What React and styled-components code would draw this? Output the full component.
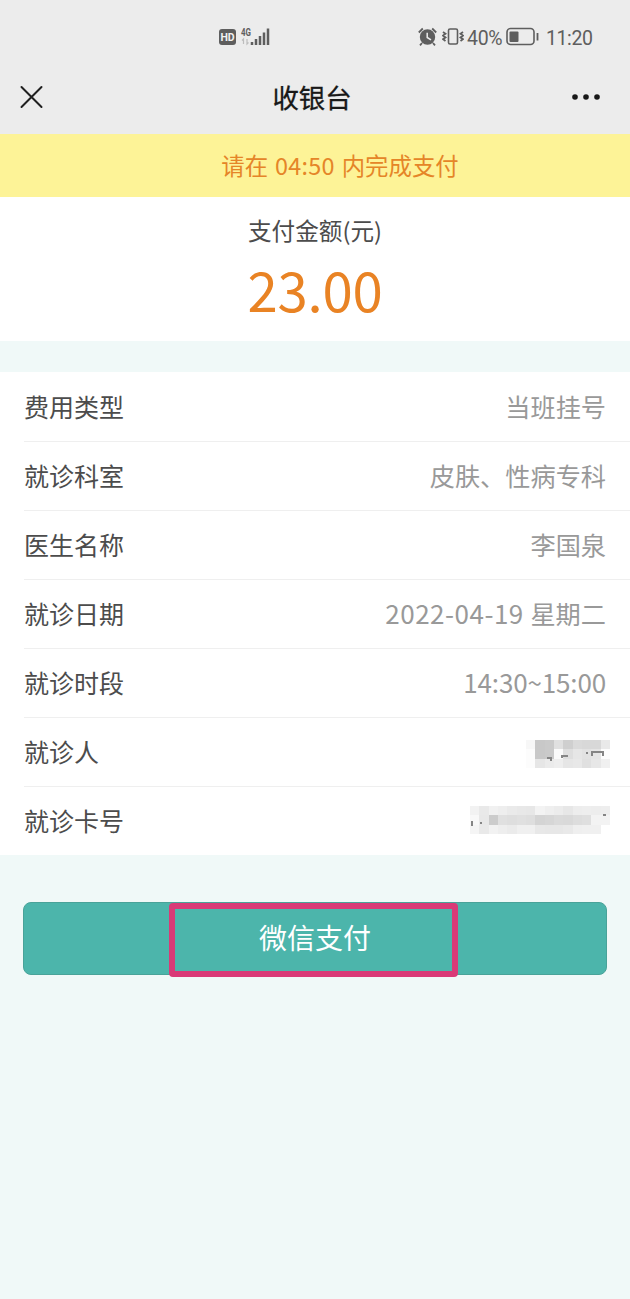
import React from 'react'
import styled, { createGlobalStyle } from 'styled-components'

const GlobalStyle = createGlobalStyle`
  * {
    box-sizing: border-box;
  }
  body {
    margin: 0;
    background: #f0f9f8;
    font-family: "Noto Sans CJK SC", "Noto Sans", sans-serif;
  }
`
const Page = styled.main`
  width: 630px;
  min-height: 1299px;
  background: #f0f9f8;
`
const TopArea = styled.header`
  height: 134px;
  background: #ececec;
`
const StatusBar = styled.div`
  display: flex;
  justify-content: space-between;
  height: 74px;
  padding: 0 38px 0 219px;
  color: #5e5e5e;
`
const StatusGroup = styled.div`
  display: flex;
  align-items: center;
  height: 74px;
`
const StatusIcon = styled.svg`
  display: block;
  flex: none;
  margin-left: ${props => props.$gap || 0}px;
`
const StatusText = styled.span`
  width: ${props => props.$width}px;
  margin-left: ${props => props.$gap}px;
  padding-top: 3px;
  font-family: Roboto, sans-serif;
  font-size: ${props => props.$size}px;
  line-height: 24px;
  letter-spacing: ${props => props.$spacing}px;
  white-space: nowrap;
`
const NavBar = styled.nav`
  display: grid;
  grid-template-columns: 60px 1fr 60px;
  align-items: center;
  height: 46px;
  padding: 0 20px;
`
const Title = styled.h1`
  margin: 0;
  padding-right: 6px;
  font-size: 26.4px;
  font-weight: 400;
  line-height: 40px;
  text-align: center;
  color: #181818;
  -webkit-text-stroke: 0.3px #181818;
`
const NavIcon = styled.svg`
  display: block;
  justify-self: ${props => props.$side};
`
const Countdown = styled.div`
  height: 63px;
  padding-left: 50px;
  background: #fdf397;
  color: #e58528;
  font-size: 23.4px;
  line-height: 62px;
  word-spacing: 1.6px;
  text-align: center;
`
const Time = styled.span`
  letter-spacing: 0.3px;
`
const Amount = styled.section`
  height: 144px;
  padding-top: 15px;
  background: #fff;
  text-align: center;
`
const AmountLabel = styled.div`
  font-size: 23.6px;
  line-height: 36px;
  color: #4c4c4c;
`
const AmountValue = styled.div`
  font-size: 54.5px;
  line-height: 81px;
  letter-spacing: -0.2px;
  color: #e98324;
`
const Details = styled.dl`
  margin: 31px 0 0;
  padding: 1px 0 0 24px;
  background: #fff;
`
const Row = styled.div`
  display: flex;
  align-items: center;
  justify-content: space-between;
  height: ${props => props.$last ? 68 : 69}px;
  padding: 0 24px 2px 0;
  border-bottom: ${props => props.$last ? 'none' : '1px solid #efefef'};
  font-size: 25px;
`
const Label = styled.dt`
  color: #4c4c4c;
`
const Value = styled.dd`
  margin: 0;
  color: #999;
  font-size: 25.2px;
  line-height: 36px;
  word-spacing: 1px;
  white-space: nowrap;
`
const Digits = styled.span`
  font-size: 26px;
  line-height: 1;
  letter-spacing: ${props => props.$spacing}px;
`
const Mosaic = styled.svg`
  display: block;
  margin: ${props => props.$drop}px -4px 0 0;
`
const Actions = styled.div`
  padding: 47px 23px 0;
`
const PayButton = styled.button`
  position: relative;
  display: block;
  width: 100%;
  height: 73px;
  padding: 0 0 2px;
  border: 1px solid #49a399;
  border-radius: 8px;
  background: #4cb5ab;
  color: #fff;
  font-family: inherit;
  font-size: 28px;
  line-height: 69px;
`
const Highlight = styled.span`
  position: absolute;
  top: 0;
  left: 145px;
  width: 289px;
  height: 74px;
  border: 6px solid #d93a77;
  border-radius: 4px;
`

const SignalIcon = () => (
  <StatusIcon width="52" height="22" viewBox="0 0 52 22">
    <rect x="0" y="3" width="17" height="16" rx="3" fill="#5e5e5e" />
    <text x="8.5" y="14.8" textAnchor="middle" fontFamily="Roboto" fontSize="10.5" fontWeight="700" fill="#f2f2f2">HD</text>
    <text x="22" y="9.5" fontFamily="Roboto" fontSize="10.5" fontWeight="700" textLength="10" lengthAdjust="spacingAndGlyphs" fill="#5e5e5e">4G</text>
    <path d="M24.5 18v-5l-1.5 1.5M28 13v5l1.5-1.5" fill="none" stroke="#bdbdbd" strokeWidth="1.2" />
    <path d="M33 16v3M37 13v6M41 10v9M45 6.5v12.5M49 2.5v16.5" stroke="#5e5e5e" strokeWidth="2.5" />
  </StatusIcon>
)

const AlarmIcon = () => (
  <StatusIcon width="19" height="20" viewBox="0 0 19 20">
    <circle cx="9.5" cy="10" r="7.7" fill="#5e5e5e" />
    <path d="M.8 5.5l4-4M18.2 5.5l-4-4M4 16l-2 2.3M15 16l2 2.3" stroke="#5e5e5e" strokeWidth="1.8" />
    <path d="M9.2 5.8v4.7l3.8 2.3" fill="none" stroke="#ececec" strokeWidth="1.5" />
  </StatusIcon>
)

const VibrateIcon = () => (
  <StatusIcon $gap={5} width="22" height="20" viewBox="0 0 22 20">
    <rect x="6.5" y="2" width="9" height="15" rx="1.5" fill="none" stroke="#5e5e5e" strokeWidth="1.6" />
    <path d="M1 5l2.5 1.8L1 8.6l2.5 1.8L1 12.2 3.5 14M21 5l-2.5 1.8L21 8.6l-2.5 1.8 2.5 1.8-2.5 1.8" fill="none" stroke="#5e5e5e" strokeWidth="1.8" />
  </StatusIcon>
)

const BatteryIcon = () => (
  <StatusIcon width="33" height="20" viewBox="0 0 33 20">
    <rect x="1" y="1.5" width="27" height="16" rx="3.5" fill="none" stroke="#5e5e5e" strokeWidth="1.6" />
    <rect x="3.5" y="4.5" width="9" height="10.5" rx="1" fill="#5e5e5e" />
    <path d="M31.5 6v7.5" stroke="#5e5e5e" strokeWidth="1.8" />
  </StatusIcon>
)

const nameCells = [
  ['#f7f7f7', '#c8c8c8', '#cacaca', '#e0e0e0', '#cfcfcf', '#dadada', '#d8d8d8', '#d8d8d8', '#e9e9e9'],
  ['#fcfcfc', '#c8c8c8', '#cacaca', '#fafafa', '#dedede', '#e6e6e6', '#e2e2e2', '#e5e5e5', '#fdfdfd'],
  ['#fcfcfc', '#e6e6e6', '#ebebeb', '#eeeeee', '#e6e6e6', '#e8e8e8', '#e0e0e0', '#e7e7e7', '#f0f0f0'],
]
const cardCells = [
  ['#f2f2f2', '#e9e9e9', '#f1f1f1', '#eeeeee', '#eaeaea', '#e8e8e8', '#e7e7e7', '#f3f3f3', '#efefef', '#ececec', '#e7e7e7', '#ededed', '#eeeeee', '#ededed', '#eeeeee'],
  ['#f8f8f8', '#e8e8e8', '#cccccc', '#e0e0e0', '#dedede', '#e0e0e0', '#dedede', '#d4d4d4', '#d6d6d6', '#dadada', '#d9d9d9', '#dddddd', '#dfdfdf', '#f3f3f3', '#f3f3f3'],
  ['#f5f5f5', '#e9e9e9', '#f2f2f2', '#eeeeee', '#ebebeb', '#f0f0f0', '#f0f0f0', '#e8e8e8', '#e7e7e7', '#e7e7e7', '#e9e9e9', '#efefef', '#f0f0f0', '#f0f0f0', '#ffffff'],
]

const MosaicBlock = ({ cells, drop, children }) => {
  const width = cells[0].length * 9.33
  return (
    <Mosaic $drop={drop} width={width} height="28" viewBox={`0 0 ${width} 28`} shapeRendering="crispEdges">
      {cells.map((line, y) => line.map((fill, x) => (
        <rect key={`${x}-${y}`} x={x * 9.33} y={y * 9.33} width="9.4" height="9.4" fill={fill} />
      )))}
      {children}
    </Mosaic>
  )
}

const rows = [
  { label: '费用类型', value: '当班挂号' },
  { label: '就诊科室', value: '皮肤、性病专科' },
  { label: '医生名称', value: '李国泉' },
  { label: '就诊日期', value: <><Digits $spacing={0.5}>2022-04-19</Digits> 星期二</> },
  { label: '就诊时段', value: <Digits $spacing={-0.15}>14:30~15:00</Digits> },
  {
    label: '就诊人',
    value: (
      <MosaicBlock cells={nameCells} drop={5}>
        <path d="M21 18h4v3M36 18v-2h6M66 16v-4h11v4M61 12v2" fill="none" stroke="#858585" strokeWidth="1.2" />
      </MosaicBlock>
    ),
  },
  {
    label: '就诊卡号',
    value: (
      <MosaicBlock cells={cardCells} drop={0}>
        <path d="M2 15v5M10 17h2M133 9h3" fill="none" stroke="#858585" strokeWidth="1.4" />
      </MosaicBlock>
    ),
  },
]

const App = () => {
  return (
    <>
      <GlobalStyle />
      <Page>
        <TopArea>
          <StatusBar>
            <StatusGroup>
              <SignalIcon />
            </StatusGroup>
            <StatusGroup>
              <AlarmIcon />
              <VibrateIcon />
              <StatusText $gap={3} $width={39} $size={19.5} $spacing={-0.3}>40%</StatusText>
              <BatteryIcon />
              <StatusText $gap={7} $width={46} $size={19.5} $spacing={-0.4}>11:20</StatusText>
            </StatusGroup>
          </StatusBar>
          <NavBar>
            <NavIcon $side="start" width="23" height="24" viewBox="0 0 23 24">
              <path d="M1.5 2l20 20M21.5 2l-20 20" stroke="#202020" strokeWidth="2" strokeLinecap="round" />
            </NavIcon>
            <Title>收银台</Title>
            <NavIcon $side="end" width="40" height="8" viewBox="0 0 40 8">
              <circle cx="5" cy="4" r="2.8" fill="#181818" />
              <circle cx="16" cy="4" r="2.8" fill="#181818" />
              <circle cx="27" cy="4" r="2.8" fill="#181818" />
            </NavIcon>
          </NavBar>
        </TopArea>
        <Countdown>请在 <Time>04:50</Time> 内完成支付</Countdown>
        <Amount>
          <AmountLabel>支付金额(元)</AmountLabel>
          <AmountValue>23.00</AmountValue>
        </Amount>
        <Details>
          {rows.map((row, i) => (
            <Row key={row.label} $last={i === rows.length - 1}>
              <Label>{row.label}</Label>
              <Value>{row.value}</Value>
            </Row>
          ))}
        </Details>
        <Actions>
          <PayButton type="button">
            微信支付
            <Highlight />
          </PayButton>
        </Actions>
      </Page>
    </>
  )
}

export default App
